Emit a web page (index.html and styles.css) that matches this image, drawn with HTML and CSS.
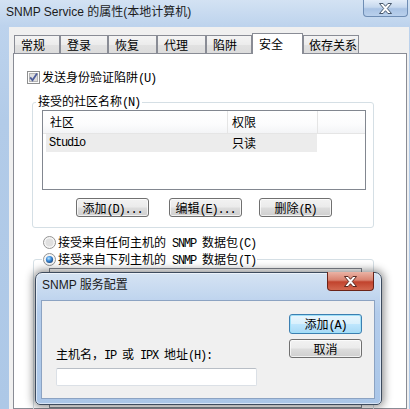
FILE: index.html
```html
<!DOCTYPE html>
<html lang="zh-CN">
<head>
<meta charset="utf-8">
<title>SNMP Service 的属性</title>
<link rel="stylesheet" href="styles.css">
</head>
<body>
<div class="win">
  <div class="titlebar">
    <span class="title">SNMP Service 的属性(本地计算机)</span>
    <span class="mclose"><svg width="15" height="11" viewBox="0 0 15 11"><path d="M1.5 0.5h3.6l2.4 2.8 2.4-2.8h3.6l-4.2 5 4.2 5h-3.6l-2.4-2.8-2.4 2.8h-3.6l4.2-5z" fill="#fff" stroke="#37475c" stroke-width="0.9"/></svg></span>
  </div>
  <div class="client">
    <div class="tabs">
      <div class="tab t1">常规</div>
      <div class="tab t2">登录</div>
      <div class="tab t3">恢复</div>
      <div class="tab t4">代理</div>
      <div class="tab t5">陷阱</div>
      <div class="tab t6 sel">安全</div>
      <div class="tab t7">依存关系</div>
    </div>
    <div class="panel">
      <div class="chk">
        <svg width="13" height="13" viewBox="0 0 13 13"><rect x="0.5" y="0.5" width="12" height="12" fill="#fcfcfc" stroke="#8e8f8f"/><rect x="2.5" y="2.5" width="8" height="8" fill="#dedede" stroke="#b4b4b4"/><path d="M3.2 6.4l2.3 2.8L10 2.6" fill="none" stroke="#4d5d9b" stroke-width="1.8"/></svg>
        <span class="lbl">发送身份验证陷阱<span class="m">(U)</span></span>
      </div>
      <fieldset class="group g1">
        <legend>接受的社区名称<span class="m">(N)</span></legend>
        <div class="list">
          <div class="lhead">
            <span class="h1">社区</span>
            <span class="h2">权限</span>
            <span class="h3"></span>
          </div>
          <div class="lrow">
            <span class="c1 m">Studio</span>
            <span class="c2">只读</span>
          </div>
        </div>
        <div class="btns">
          <div class="btn">添加<span class="m">(D)...</span></div>
          <div class="btn">编辑<span class="m">(E)...</span></div>
          <div class="btn">删除<span class="m">(R)</span></div>
        </div>
      </fieldset>
      <div class="radio r1">
        <svg width="13" height="13" viewBox="0 0 13 13"><circle cx="6.5" cy="6.5" r="6" fill="#f6f6f6" stroke="#939393"/><circle cx="6.5" cy="6.5" r="4" fill="#e0e0e0"/></svg>
        <span class="lbl">接受来自任何主机的<span class="m"> SNMP </span>数据包<span class="m">(C)</span></span>
      </div>
      <fieldset class="group g2">
        <legend>
          <span class="radio">
            <svg width="13" height="13" viewBox="0 0 13 13"><defs><radialGradient id="rd" cx="0.4" cy="0.35" r="0.7"><stop offset="0" stop-color="#b8e6ff"/><stop offset="0.5" stop-color="#3c8ad8"/><stop offset="1" stop-color="#17457f"/></radialGradient></defs><circle cx="6.5" cy="6.5" r="6" fill="#f6f6f6" stroke="#939393"/><circle cx="6.5" cy="6.5" r="3.6" fill="url(#rd)"/></svg>
            <span class="lbl">接受来自下列主机的<span class="m"> SNMP </span>数据包<span class="m">(T)</span></span>
          </span>
        </legend>
        <div class="list2"></div>
      </fieldset>
    </div>
  </div>
</div>

<div class="dlg">
  <div class="dtitle">
    <span class="dtext">SNMP 服务配置</span>
    <span class="dclose"><svg width="15" height="11" viewBox="0 0 15 11"><path d="M1.5 0.5h3.6l2.4 2.8 2.4-2.8h3.6l-4.2 5 4.2 5h-3.6l-2.4-2.8-2.4 2.8h-3.6l4.2-5z" fill="#fff" stroke="#4a1a12" stroke-width="0.9"/></svg></span>
  </div>
  <div class="dclient">
    <div class="dleft">
      <div class="dlabel">主机名，<span class="m">IP </span>或<span class="m"> IPX </span>地址<span class="m">(H):</span></div>
      <div class="input"></div>
    </div>
    <div class="dright">
      <div class="btn dbtn focus">添加<span class="m">(A)</span></div>
      <div class="btn dbtn">取消</div>
    </div>
  </div>
</div>
</body>
</html>
```
FILE: styles.css
```css
html, body {
  margin: 0;
  padding: 0;
}
body {
  width: 410px;
  height: 409px;
  overflow: hidden;
  position: relative;
  font-family: "Noto Sans CJK SC", sans-serif;
  font-size: 12px;
  color: #000;
}
.m {
  font-family: "Liberation Mono", "Noto Sans CJK SC", monospace;
  letter-spacing: -1.2px;
  white-space: pre;
}

/* main window */
.win {
  display: flex;
  flex-direction: column;
  height: 409px;
  background: linear-gradient(180deg, #d3e2f3 0, #bdd3ed 26px, #b2cbe8 120px, #adc8e7 100%);
}
.titlebar {
  height: 27px;
  display: flex;
  align-items: flex-start;
  flex: none;
}
.title {
  padding-left: 6px;
  line-height: 25px;
  font-family: "Liberation Sans", "Noto Sans CJK SC", sans-serif;
  font-size: 12px;
  color: #1b1b1b;
}
.mclose {
  margin-left: auto;
  margin-right: 2px;
  width: 45px;
  height: 17px;
  box-sizing: border-box;
  border: 1px solid #6e8db4;
  border-top: none;
  border-radius: 0 0 4px 4px;
  background: linear-gradient(180deg, #e2ecf8 0, #c6d8ee 45%, #a9c3e4 55%, #b9d0ec 100%);
  display: flex;
  align-items: center;
  justify-content: center;
}
.client {
  flex: 1;
  margin: 0 1px 0 9px;
  background: #f0f0f0;
  padding: 6px 2px 0 4px;
  display: flex;
  flex-direction: column;
  min-height: 0;
}

/* tabs */
.tabs {
  display: flex;
  align-items: flex-end;
  padding-left: 1px;
  flex: none;
}
.tab {
  box-sizing: border-box;
  height: 18px;
  border: 1px solid #898c95;
  border-bottom: none;
  background: linear-gradient(180deg, #f4f4f4 0, #ececec 50%, #e2e2e2 51%, #dcdcdc 100%);
  padding-left: 6px;
  line-height: 17px;
  white-space: nowrap;
}
.t1 { width: 46px; }
.t2 { width: 48px; }
.t3 { width: 49px; }
.t4 { width: 49px; }
.t5 { width: 46px; }
.t6 { width: 51px; }
.t7 { width: 56px; padding-left: 5px; }
.tab.sel {
  height: 21px;
  background: #fff;
  margin-bottom: -1px;
  position: relative;
  z-index: 1;
  padding-top: 1px;
}

/* panel */
.panel {
  flex: 1;
  background: #fff;
  border: 1px solid #898c95;
  min-height: 0;
}
.chk {
  display: flex;
  align-items: center;
  height: 13px;
  margin: 17px 0 0 13px;
}
.chk svg, .radio svg {
  flex: none;
  display: block;
}
.lbl {
  margin-left: 2px;
  line-height: 13px;
  white-space: nowrap;
}

.group {
  margin: 0;
  padding: 0;
  border: 1px solid #d5dfe5;
  border-radius: 3px;
  min-width: 0;
  box-sizing: border-box;
}
.group legend {
  padding: 0 2px;
  margin-left: 3px;
  line-height: 14px;
  white-space: nowrap;
}
.g1 {
  margin: 10px 0 0 18px;
  width: 342px;
  padding-bottom: 10px;
}

.list {
  margin-left: 9px;
  width: 324px;
  height: 80px;
  box-sizing: border-box;
  border: 1px solid #828790;
}
.lhead {
  display: flex;
  height: 22px;
  border-bottom: 1px solid #e5e5e5;
  background: linear-gradient(180deg, #ffffff 0, #fcfcfd 60%, #f3f4f6 100%);
  line-height: 22px;
}
.lhead span {
  box-sizing: border-box;
}
.h1 {
  width: 185px;
  padding-left: 7px;
  border-right: 1px solid #e5e5e5;
}
.h2 {
  width: 90px;
  padding-left: 4px;
  border-right: 1px solid #e5e5e5;
}
.h3 {
  flex: 1;
}
.lrow {
  display: flex;
  margin-left: 3px;
  width: 271px;
  height: 18px;
  background: #ececec;
  line-height: 18px;
}
.c1 {
  width: 182px;
  box-sizing: border-box;
  padding-left: 3px;
}
.c2 {
  padding-left: 4px;
}

.btns {
  display: flex;
  margin: 8px 0 0 43px;
}
.btn {
  box-sizing: border-box;
  width: 73px;
  height: 19px;
  border: 1px solid #707070;
  border-radius: 3px;
  background: linear-gradient(180deg, #f2f2f2 0, #ebebeb 48%, #dddddd 52%, #cfcfcf 100%);
  box-shadow: inset 0 0 0 1px rgba(255, 255, 255, 0.7);
  text-align: center;
  line-height: 17px;
  white-space: nowrap;
}
.btns .btn:nth-child(2) { margin-left: 20px; }
.btns .btn:nth-child(3) { margin-left: 17px; }

.radio {
  display: flex;
  align-items: center;
  height: 13px;
}
.r1 {
  margin: 8px 0 0 29px;
}
.g2 {
  margin: 4px 0 0 19px;
  width: 341px;
  height: 160px;
}
.g2 legend {
  margin-left: 8px;
  padding: 0 1px;
  line-height: 13px;
}
.list2 {
  margin: 2px 0 0 15px;
  width: 313px;
  height: 140px;
  box-sizing: border-box;
  border: 1px solid #828790;
}

/* overlay dialog */
.dlg {
  position: absolute;
  left: 35px;
  top: 272px;
  width: 347px;
  height: 133px;
  box-sizing: border-box;
  border: 1px solid #3d4b5e;
  border-radius: 7px 7px 5px 5px;
  background: linear-gradient(180deg, #d5e3f3 0, #c3d7ef 22px, #b3cceb 40px, #aac6e8 100%);
  box-shadow: 0 0 8px 2px rgba(0, 0, 0, 0.45), inset 0 0 0 1px rgba(255, 255, 255, 0.55);
  padding: 0 6px 5px 5px;
  display: flex;
  flex-direction: column;
  z-index: 5;
}
.dtitle {
  height: 27px;
  display: flex;
  align-items: flex-start;
  flex: none;
}
.dtext {
  padding-left: 1px;
  line-height: 25px;
  font-family: "Liberation Sans", "Noto Sans CJK SC", sans-serif;
  font-size: 12px;
  color: #1b1b1b;
}
.dclose {
  margin: -1px 1px 0 auto;
  width: 47px;
  height: 19px;
  box-sizing: border-box;
  border: 1px solid #6b2318;
  border-top: none;
  border-radius: 0 0 4px 4px;
  background: linear-gradient(180deg, #eab3a5 0, #d98370 45%, #c1432d 55%, #d2674f 100%);
  display: flex;
  align-items: center;
  justify-content: center;
}
.dclient {
  flex: 1;
  border: 1px solid #8ca3c2;
  background: #f0f0f0;
  display: flex;
}
.dleft {
  flex: 1;
  display: flex;
  flex-direction: column;
  justify-content: flex-end;
  padding: 0 0 12px 14px;
}
.dlabel {
  line-height: 14px;
  margin-bottom: 5px;
  white-space: nowrap;
}
.input {
  width: 201px;
  height: 18px;
  box-sizing: border-box;
  border: 1px solid #dbe0e6;
  border-top-color: #b8bec6;
  border-radius: 2px;
  background: #fff;
}
.dright {
  display: flex;
  flex-direction: column;
  padding: 13px 12px 0 0;
  gap: 5px;
}
.dbtn.focus {
  height: 20px;
  border-color: #3c7fb1;
  background: linear-gradient(180deg, #eaf6fd 0, #d9f0fc 48%, #bee6fd 52%, #a7d9f5 100%);
  box-shadow: inset 0 0 0 1px #9fe0f8;
  line-height: 18px;
}
```
